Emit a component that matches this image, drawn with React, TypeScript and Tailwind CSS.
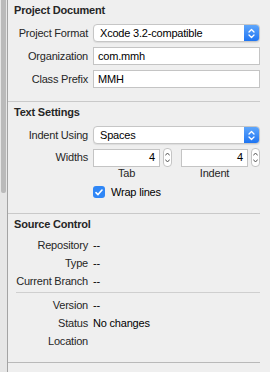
import React from "react";

const font = { fontFamily: '"Liberation Sans", Arial, sans-serif' };

function Popup({ value }: { value: string }) {
  return (
    <div className="flex h-[18px] w-full items-stretch rounded-[4px] border border-[#c6c6c6] bg-white shadow-[0_1px_1px_rgba(0,0,0,0.08)]">
      <span className="flex flex-1 items-center pl-[6px] text-[11px] text-black">{value}</span>
      <span className="flex w-[15px] items-center justify-center rounded-r-[3px] bg-gradient-to-b from-[#5ea6fb] to-[#1d74f2]">
        <svg width="7" height="11" viewBox="0 0 7 11" fill="none" stroke="white" strokeWidth="1.3" strokeLinecap="round" strokeLinejoin="round">
          <path d="M1 4 L3.5 1.5 L6 4" />
          <path d="M1 7 L3.5 9.5 L6 7" />
        </svg>
      </span>
    </div>
  );
}

function Field({ value, right }: { value: string; right?: boolean }) {
  return (
    <div
      className={`flex h-[18px] w-full items-center border border-[#c4c4c4] bg-white px-[4px] text-[11px] text-black ${
        right ? "justify-end" : ""
      }`}
    >
      {value}
    </div>
  );
}

function Stepper() {
  return (
    <div className="flex h-[19px] w-[9px] flex-col items-center justify-center gap-[3px] rounded-[4px] border border-[#c4c4c4] bg-white">
      <svg width="5" height="4" viewBox="0 0 5 4" fill="none" stroke="#555" strokeWidth="1" strokeLinecap="round">
        <path d="M0.5 3.2 L2.5 1 L4.5 3.2" />
      </svg>
      <svg width="5" height="4" viewBox="0 0 5 4" fill="none" stroke="#555" strokeWidth="1" strokeLinecap="round">
        <path d="M0.5 0.8 L2.5 3 L4.5 0.8" />
      </svg>
    </div>
  );
}

function Row({ label, children, className = "" }: { label: string; children?: React.ReactNode; className?: string }) {
  return (
    <div className={`flex items-center ${className}`}>
      <span className="w-[85px] shrink-0 pr-[5px] text-right text-[11px] text-[#262626]">{label}</span>
      <div className="flex flex-1 items-center text-[11px] text-black">{children}</div>
    </div>
  );
}

function Header({ title }: { title: string }) {
  return <div className="flex h-[20px] items-center pl-[6px] text-[11px] font-bold text-[#262626]">{title}</div>;
}

export default function App() {
  return (
    <div className="flex h-[372px] w-[270px] overflow-hidden bg-[#ececec] tracking-[-0.2px]" style={font}>
      {/* scroll strip */}
      <div className="flex w-[7px] shrink-0 bg-[#e6e6e6] pl-[1px]">
        <div className="h-[193px] w-[5px] rounded-b-[2px] bg-[#bababa]" />
      </div>

      <div className="flex flex-1 flex-col border-l border-[#a3a3a3] bg-[#efefef] pr-[10px]">
        {/* Project Document */}
        <div className="h-[102px] border-b border-[#c9c9c9]">
          <Header title="Project Document" />
          <Row label="Project Format" className="mt-[4px] h-[18px]">
            <Popup value="Xcode 3.2-compatible" />
          </Row>
          <Row label="Organization" className="mt-[5px] h-[18px]">
            <Field value="com.mmh" />
          </Row>
          <Row label="Class Prefix" className="mt-[5px] h-[18px]">
            <Field value="MMH" />
          </Row>
        </div>

        {/* Text Settings */}
        <div className="h-[112px] border-b border-[#c9c9c9]">
          <Header title="Text Settings" />
          <Row label="Indent Using" className="mt-[4px] h-[18px]">
            <Popup value="Spaces" />
          </Row>
          <Row label="Widths" className="mt-[4px] h-[19px]">
            <div className="flex w-full items-center">
              <div className="w-[67px]">
                <Field value="4" right />
              </div>
              <div className="ml-[3px]">
                <Stepper />
              </div>
              <div className="ml-[9px] w-[67px]">
                <Field value="4" right />
              </div>
              <div className="ml-[3px]">
                <Stepper />
              </div>
            </div>
          </Row>
          <Row label="" className="h-[12px]">
            <div className="flex w-full text-[11px] text-[#262626]">
              <span className="w-[67px] text-center">Tab</span>
              <span className="ml-[21px] w-[67px] text-center">Indent</span>
            </div>
          </Row>
          <Row label="" className="mt-[6px] h-[14px]">
            <span className="flex h-[12px] w-[12px] items-center justify-center rounded-[3px] bg-[#2f86f6]">
              <svg width="8" height="7" viewBox="0 0 8 7" fill="none" stroke="white" strokeWidth="1.6" strokeLinecap="round" strokeLinejoin="round">
                <path d="M1 3.6 L3 5.6 L7 1" />
              </svg>
            </span>
            <span className="ml-[6px]">Wrap lines</span>
          </Row>
        </div>

        {/* Source Control */}
        <div className="h-[149px] border-b border-[#b9b9b9]">
          <Header title="Source Control" />
          <Row label="Repository" className="mt-[2px] h-[18px]">--</Row>
          <Row label="Type" className="h-[18px]">--</Row>
          <Row label="Current Branch" className="h-[18px]">--</Row>
          <div className="ml-[8px] mt-[2px] h-px bg-[#cfcfcf]" />
          <Row label="Version" className="mt-[3px] h-[18px]">--</Row>
          <Row label="Status" className="h-[18px]">No changes</Row>
          <Row label="Location" className="h-[18px]" />
        </div>
      </div>
    </div>
  );
}
